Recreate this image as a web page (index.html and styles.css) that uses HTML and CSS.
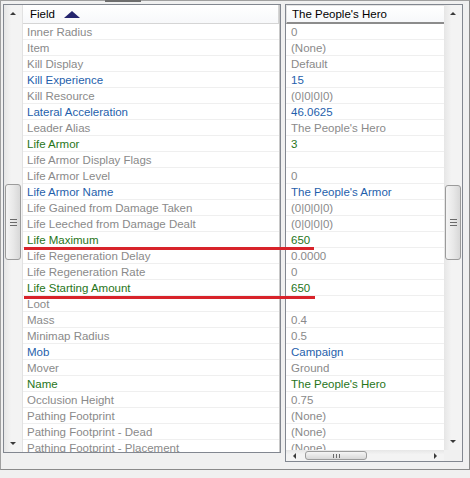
FILE: index.html
```html
<!DOCTYPE html>
<html>
<head>
<meta charset="utf-8">
<link rel="stylesheet" href="styles.css">
</head>
<body>
<div class="window">
  <div class="tabstub"></div>
  <div class="panes">
    <div class="pane left">
      <div class="vscroll">
        <div class="btn"><span class="arr up"></span></div>
        <div class="track"><div class="thumb vthumb l"><span class="grip-h"></span></div></div>
        <div class="btn"><span class="arr down"></span></div>
      </div>
      <div class="list names">
        <div class="hdr"><span class="htext">Field</span><svg class="sort" width="16" height="8" viewBox="0 0 16 8"><polygon points="8,0 16,7 0,7" fill="#25256e"/></svg></div>
        <div class="row g">Inner Radius</div>
        <div class="row g">Item</div>
        <div class="row g">Kill Display</div>
        <div class="row b">Kill Experience</div>
        <div class="row g">Kill Resource</div>
        <div class="row b">Lateral Acceleration</div>
        <div class="row g">Leader Alias</div>
        <div class="row n">Life Armor</div>
        <div class="row g">Life Armor Display Flags</div>
        <div class="row g">Life Armor Level</div>
        <div class="row b">Life Armor Name</div>
        <div class="row g">Life Gained from Damage Taken</div>
        <div class="row g">Life Leeched from Damage Dealt</div>
        <div class="row n">Life Maximum</div>
        <div class="row g">Life Regeneration Delay</div>
        <div class="row g">Life Regeneration Rate</div>
        <div class="row n">Life Starting Amount</div>
        <div class="row g">Loot</div>
        <div class="row g">Mass</div>
        <div class="row g">Minimap Radius</div>
        <div class="row b">Mob</div>
        <div class="row g">Mover</div>
        <div class="row n">Name</div>
        <div class="row g">Occlusion Height</div>
        <div class="row g">Pathing Footprint</div>
        <div class="row g">Pathing Footprint - Dead</div>
        <div class="row g">Pathing Footprint - Placement</div>
      </div>
    </div>
    <div class="pane right">
      <div class="rbody">
        <div class="list vals">
          <div class="hdr rhdr"><span class="htext">The People's Hero</span></div>
          <div class="row g">0</div>
          <div class="row g">(None)</div>
          <div class="row g">Default</div>
          <div class="row b">15</div>
          <div class="row g">(0|0|0|0)</div>
          <div class="row b">46.0625</div>
          <div class="row g">The People's Hero</div>
          <div class="row n">3</div>
          <div class="row g"></div>
          <div class="row g">0</div>
          <div class="row b">The People's Armor</div>
          <div class="row g">(0|0|0|0)</div>
          <div class="row g">(0|0|0|0)</div>
          <div class="row n">650</div>
          <div class="row g">0.0000</div>
          <div class="row g">0</div>
          <div class="row n">650</div>
          <div class="row g"></div>
          <div class="row g">0.4</div>
          <div class="row g">0.5</div>
          <div class="row b">Campaign</div>
          <div class="row g">Ground</div>
          <div class="row n">The People's Hero</div>
          <div class="row g">0.75</div>
          <div class="row g">(None)</div>
          <div class="row g">(None)</div>
          <div class="row g">(None)</div>
        </div>
        <div class="vscroll">
          <div class="btn"><span class="arr up"></span></div>
          <div class="track"><div class="thumb vthumb r"><span class="grip-h"></span></div></div>
          <div class="btn"><span class="arr down"></span></div>
        </div>
      </div>
      <div class="hscroll">
        <div class="hbtn"><span class="arr lft"></span></div>
        <div class="htrack"><div class="thumb hthumb"><span class="grip-v"></span></div></div>
        <div class="hbtn"><span class="arr rgt"></span></div>
        <div class="corner"></div>
      </div>
    </div>
  </div>
  <div class="mark m1"></div>
  <div class="mark m2"></div>
</div>
</body>
</html>
```

FILE: styles.css
```css
html, body {
  margin: 0;
  padding: 0;
  background: #f0f0f0;
}
body {
  font-family: "Liberation Sans", Arial, sans-serif;
  font-size: 11.5px;
}
.window {
  position: relative;
  box-sizing: border-box;
  width: 470px;
  height: 470px;
  border: 1px solid #a0a0a0;
  border-right-color: #8a8a8a;
  border-bottom-color: #8a8a8a;
  background: #f0f0f0;
  padding: 3px 0 0 2px;
}
.tabstub {
  position: absolute;
  left: 104px;
  top: -1px;
  width: 36px;
  height: 2px;
  background: #6e6e6e;
}
.panes {
  display: flex;
  align-items: flex-start;
  gap: 4px;
}
.pane {
  box-sizing: border-box;
  border: 1px solid #828790;
  background: #fff;
  overflow: hidden;
}
.pane.left {
  width: 278px;
  height: 449px;
  display: flex;
}
.pane.right {
  width: 178px;
  height: 458px;
  display: flex;
  flex-direction: column;
}
.rbody {
  flex: 1;
  display: flex;
  min-height: 0;
}
.list {
  flex: 1;
  min-width: 0;
  overflow: hidden;
  background: #fff;
}
.names {
  border-left: 1px solid #e2e2e2;
  border-right: 1px solid #c8c8c8;
}
.hdr {
  box-sizing: border-box;
  height: 19px;
  display: flex;
  align-items: center;
  background: linear-gradient(#ffffff, #f7f8fa);
  border-bottom: 1px solid #d5d5d5;
  color: #000;
  white-space: nowrap;
}
.names .hdr {
  padding-left: 7px;
  border-right: 1px solid #d5d5d5;
}
.htext {
  line-height: 18px;
}
.sort {
  margin-left: 9px;
  margin-top: 1px;
}
.rhdr {
  padding-left: 5px;
  border-top: 1px solid #e4e4e4;
  border-left: 1px solid #e4e4e4;
  border-bottom: 2px solid #8c8c8c;
}
.row {
  box-sizing: border-box;
  height: 16px;
  line-height: 16px;
  border-bottom: 1px solid #efefef;
  white-space: nowrap;
  overflow: hidden;
}
.names .row {
  padding-left: 4px;
}
.vals .row {
  padding-left: 5px;
}
.g { color: #8a8a8a; }
.b { color: #1f5fac; }
.n { color: #27751a; }

.vscroll {
  width: 18px;
  flex: none;
  display: flex;
  flex-direction: column;
  background: linear-gradient(to right, #e6e6e6, #f3f3f3 40%, #f3f3f3);
}
.btn {
  height: 17px;
  flex: none;
  display: flex;
  align-items: center;
  justify-content: center;
}
.track {
  flex: 1;
}
.arr {
  width: 0;
  height: 0;
  display: block;
}
.arr.up {
  border-left: 3px solid transparent;
  border-right: 3px solid transparent;
  border-bottom: 3px solid #3a3a3a;
}
.arr.down {
  border-left: 3px solid transparent;
  border-right: 3px solid transparent;
  border-top: 3px solid #3a3a3a;
}
.arr.lft {
  border-top: 3px solid transparent;
  border-bottom: 3px solid transparent;
  border-right: 3px solid #3a3a3a;
}
.arr.rgt {
  border-top: 3px solid transparent;
  border-bottom: 3px solid transparent;
  border-left: 3px solid #3a3a3a;
}
.thumb {
  box-sizing: border-box;
  border: 1px solid #9b9b9b;
  border-radius: 3px;
  display: flex;
  align-items: center;
  justify-content: center;
}
.vthumb {
  width: 16px;
  margin-left: 1px;
  background: linear-gradient(to right, #f4f4f4, #e9e9e9 50%, #d8d8d8);
}
.vthumb.l {
  margin-top: 162px;
  height: 76px;
}
.vthumb.r {
  margin-top: 163px;
  height: 75px;
}
.grip-h {
  width: 7px;
  height: 5px;
  border-top: 1px solid #6a6a6a;
  border-bottom: 1px solid #6a6a6a;
  background: linear-gradient(transparent 2px, #6a6a6a 2px, #6a6a6a 3px, transparent 3px);
}
.hscroll {
  height: 11px;
  flex: none;
  display: flex;
  background: linear-gradient(#e6e6e6, #f3f3f3 40%);
}
.hbtn {
  width: 17px;
  flex: none;
  display: flex;
  align-items: center;
  justify-content: center;
}
.htrack {
  flex: 1;
  display: flex;
  align-items: center;
}
.hthumb {
  margin-left: 2px;
  width: 62px;
  height: 9px;
  background: linear-gradient(#f4f4f4, #e6e6e6 50%, #d8d8d8);
}
.grip-v {
  width: 5px;
  height: 4px;
  border-left: 1px solid #6a6a6a;
  border-right: 1px solid #6a6a6a;
  background: linear-gradient(to right, transparent 2px, #6a6a6a 2px, #6a6a6a 3px, transparent 3px);
}
.corner {
  width: 18px;
  flex: none;
  background: #f0f0f0;
}
.mark {
  position: absolute;
  height: 3px;
  background: #d8232a;
}
.m1 {
  left: 23px;
  top: 246px;
  width: 290px;
}
.m2 {
  left: 23px;
  top: 295px;
  width: 291px;
}
```
